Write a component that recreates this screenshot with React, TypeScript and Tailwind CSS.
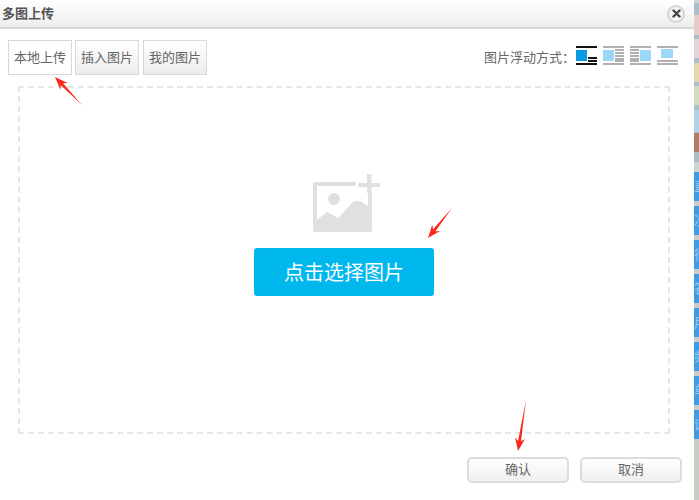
import React from "react";

const font = { fontFamily: '"Liberation Sans","Noto Sans CJK SC",sans-serif' };

function Arrow({ x1, y1, x2, y2 }: { x1: number; y1: number; x2: number; y2: number }) {
  const a = Math.atan2(y2 - y1, x2 - x1);
  const px = -Math.sin(a), py = Math.cos(a);
  const hx = x2 - Math.cos(a) * 13, hy = y2 - Math.sin(a) * 13;
  const nx = x2 - Math.cos(a) * 10, ny = y2 - Math.sin(a) * 10;
  const pts = [
    [x1, y1],
    [nx + px * 1.5, ny + py * 1.5],
    [hx + px * 5, hy + py * 5],
    [x2, y2],
    [hx - px * 5, hy - py * 5],
    [nx - px * 1.5, ny - py * 1.5],
  ].map((p) => p.join(",")).join(" ");
  return <polygon points={pts} fill="#fb2a1c" />;
}

type Kind = "active" | "left" | "right" | "center";

function FloatIcon({ kind }: { kind: Kind }) {
  const c = kind === "active" ? "#111111" : "#b0b0b0";
  const sq = kind === "active" ? "#0a9be6" : "#9bd8f7";
  const rows: [number, number, number][] = [];
  rows.push([0, 0, 21], [17, 0, 21]);
  if (kind === "active") rows.push([11, 12, 9], [14, 12, 9]);
  if (kind === "left") [3, 6, 9, 12, 14].forEach((y) => rows.push([y, 12, 9]));
  if (kind === "right") [3, 6, 9, 12, 14].forEach((y) => rows.push([y, 0, 9]));
  if (kind === "center") rows.push([14, 0, 21]);
  const sx = kind === "right" ? 10 : kind === "center" ? 4 : 0;
  const sy = kind === "center" ? 3 : 4;
  const sh = kind === "center" ? 9 : 11;
  const sw = kind === "center" ? 12 : 11;
  return (
    <svg width="21" height="19" viewBox="0 0 21 19" className="block">
      {rows.map(([y, x, w]) => (
        <rect key={`${y}-${x}`} x={x} y={y} width={w} height={2} fill={c} />
      ))}
      <rect x={sx} y={sy} width={sw} height={sh} fill={sq} />
    </svg>
  );
}

const bands: [number, string][] = [
  [3, "#c9d4d4"], [12, "#a9c0cc"], [20, "#e3cfc5"], [4, "#a9bfca"], [19, "#e3d3da"], [5, "#a9bfca"],
  [19, "#e5d9a5"], [4, "#a9bfca"], [19, "#cfdcc0"], [5, "#a9bfca"], [22, "#aed2e8"], [1, "#a9bfca"],
  [19, "#b37a6a"], [1, "#a9bfca"], [9, "#a9bcc6"], [10, "#c8d5d0"],
];

function SideStrip() {
  const chars = ["直", "次", "行", "答", "用", "频", "单", "设"];
  return (
    <div className="w-[5px] shrink-0 flex flex-col h-full overflow-hidden bg-[#c8cdc8]">
      {bands.map(([h, c], i) => (
        <div key={i} className="shrink-0" style={{ height: h, background: c }} />
      ))}
      {chars.map((c, i) => (
        <div key={i} className="h-[34px] shrink-0 pb-[5px]">
          <div className="h-[29px] bg-[#3f9be6] text-[#9cc8f0] text-[13px] leading-[29px] overflow-hidden">{c}</div>
        </div>
      ))}
    </div>
  );
}

export default function App() {
  return (
    <div className="relative w-[699px] h-[500px] overflow-hidden bg-white flex" style={font}>
      <div className="flex-1 min-w-0 flex flex-col">
        <header className="h-[29px] shrink-0 flex items-center justify-between pl-[2px] pr-[9px] border-b-2 border-[#d6d6d6] bg-gradient-to-b from-white to-[#eeeeee]">
          <span className="text-[13px] font-bold text-[#555]">多图上传</span>
          <span className="w-[18px] h-[18px] rounded-full bg-[#f4f4f4] border-2 border-[#d4d4d4] flex items-center justify-center">
            <svg width="9" height="9" viewBox="0 0 9 9"><path d="M1.5 1.5l6 6M7.5 1.5l-6 6" stroke="#444" strokeWidth="2.4" strokeLinecap="round" /></svg>
          </span>
        </header>
        <div className="flex items-center justify-between pl-[8px] pr-[16px] pt-[11px]">
          <div className="flex gap-[3px] text-[13px] text-[#666]">
            <button className="w-[64px] h-[35px] border border-[#d8d8d8] bg-white">本地上传</button>
            <button className="w-[64px] h-[35px] border border-[#d8d8d8] bg-gradient-to-b from-white to-[#ececec]">插入图片</button>
            <button className="w-[64px] h-[35px] ml-[1px] border border-[#d8d8d8] bg-gradient-to-b from-white to-[#ececec]">我的图片</button>
          </div>
          <div className="flex items-center">
            <span className="text-[13px] text-[#666]">图片浮动方式：</span>
            <div className="flex gap-[6px] ml-[1px] mb-[5px]">
              <FloatIcon kind="active" />
              <FloatIcon kind="left" />
              <FloatIcon kind="right" />
              <FloatIcon kind="center" />
            </div>
          </div>
        </div>
        <main className="mt-[11px] ml-[18px] mr-[24px] h-[348px] shrink-0 border-2 border-dashed border-[#e6e6e6] flex flex-col items-center pt-[86px]">
          <svg width="67" height="58" viewBox="0 0 67 58" className="block ml-[5px]">
            <path d="M2 8h41v4H4v42h51V19h4v37a2 2 0 0 1-2 2H2a2 2 0 0 1-2-2V10a2 2 0 0 1 2-2z" fill="#e0e0e0" />
            <circle cx="21" cy="25" r="6" fill="#e0e0e0" />
            <path d="M4 46l10-8 11 6 13-14c2-3 6-4 9-3l8 5v22H4z" fill="#e0e0e0" />
            <path d="M54 0h4.5v9H67v4h-8.5v6H54v-6h-9V9h9z" fill="#e0e0e0" />
          </svg>
          <button className="mt-[16px] w-[180px] h-[48px] pt-[2px] rounded-[3px] bg-[#00b7ee] text-white text-[20px]">点击选择图片</button>
        </main>
        <footer className="flex justify-end gap-[11px] pr-[12px] pt-[23px] text-[13px] text-[#666]">
          <button className="w-[102px] h-[26px] rounded-[5px] border-2 border-[#dcdcdc] bg-gradient-to-b from-white to-[#efefef]">确认</button>
          <button className="w-[102px] h-[26px] rounded-[5px] border-2 border-[#dcdcdc] bg-gradient-to-b from-white to-[#efefef]">取消</button>
        </footer>
      </div>
      <SideStrip />
      <svg className="absolute inset-0 pointer-events-none" width="699" height="500">
        <Arrow x1={82} y1={105} x2={55} y2={77} />
        <Arrow x1={452} y1={208} x2={428} y2={238} />
        <Arrow x1={526} y1={400} x2={518} y2={451} />
      </svg>
    </div>
  );
}
